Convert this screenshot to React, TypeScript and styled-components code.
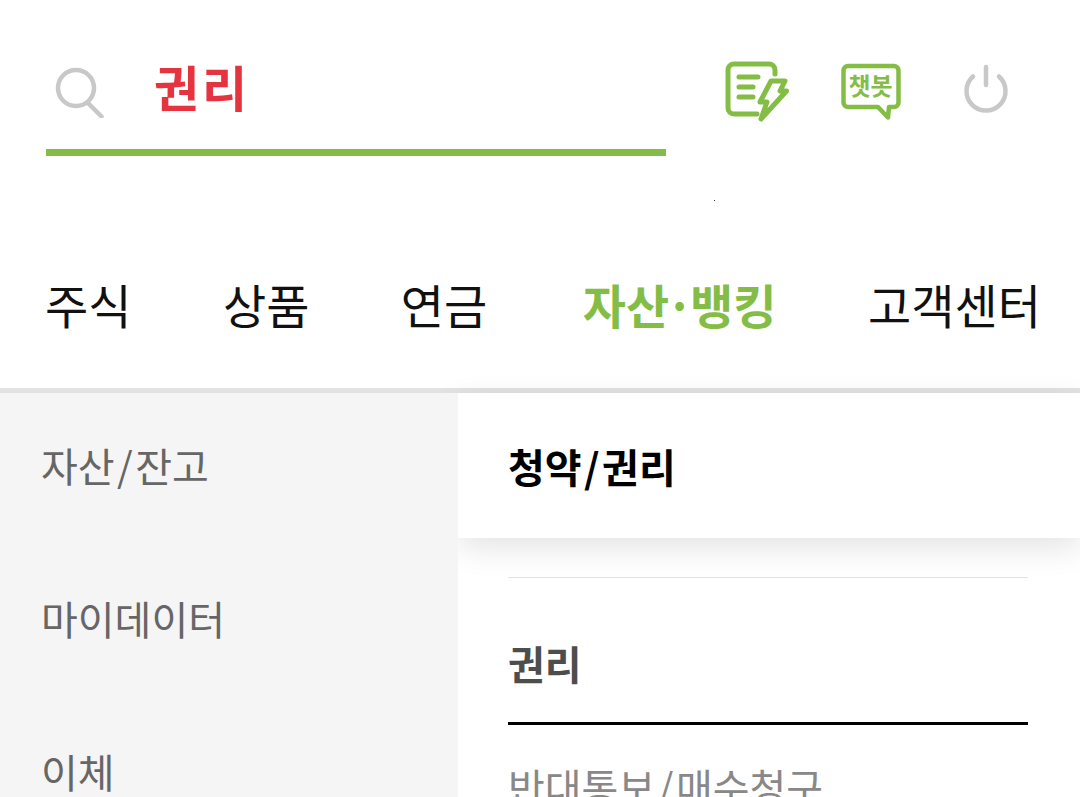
import React from "react";
import styled, { createGlobalStyle } from "styled-components";

const Global = createGlobalStyle`
  html, body { margin: 0; padding: 0; background: #fff; overflow: hidden; }
  body { font-family: "Noto Sans CJK KR", "Noto Sans", sans-serif; }
`;
const Page = styled.div`
  width: 1080px; height: 797px; overflow: hidden; display: flex; flex-direction: column; background: #fff;
`;
const Top = styled.header`
  height: 388px; flex: none; position: relative; display: flex; flex-direction: column;
`;
const SearchRow = styled.div`
  display: flex; height: 156px; flex: none; padding-left: 46px;
`;
const SearchBox = styled.div`
  width: 620px; height: 156px; box-sizing: border-box; border-bottom: 7px solid #84bd45;
  display: flex; align-items: flex-start; padding: 60px 0 0 8px; gap: 50px;
`;
const Query = styled.span`
  font-size: 49px; line-height: 52px; font-weight: 700; color: #e5343f; letter-spacing: 3px;
`;
const Tools = styled.div`
  display: flex; align-items: flex-start; padding: 61px 0 0 59px; gap: 48px;
`;
const Speck = styled.i`
  position: absolute; left: 714px; top: 200px; width: 1px; height: 1px; background: #333;
`;
const Nav = styled.nav`
  display: flex; align-items: center; justify-content: space-between; padding: 0 39px 0 45px; margin-top: 120px; height: 56px;
`;
const NavItem = styled.span<{ $active?: boolean }>`
  font-size: 47px; line-height: 56px;
  margin-left: ${p => (p.$active ? 4 : 0)}px;
  font-weight: ${p => (p.$active ? 700 : 400)};
  color: ${p => (p.$active ? "#84bd45" : "#111")};
`;
const NavDot = styled.span`
  margin: 0 -3.5px;
`;
const Divider = styled.div`
  height: 5px; flex: none; background: #e2e2e2;
`;
const Body = styled.div`
  flex: 1; display: flex; min-height: 0;
`;
const Side = styled.aside`
  width: 458px; flex: none; background: #f5f5f5; display: flex; flex-direction: column; padding: 41px 0 0 41px;
  box-sizing: border-box; gap: 91px; position: relative; z-index: 1;
`;
const SideItem = styled.div`
  font-size: 40px; line-height: 62px; color: #666;
`;
const Slash = styled.span<{ $gap: number }>`
  margin: 0 ${p => p.$gap}px;
`;
const Main = styled.main`
  flex: 1; min-width: 0; display: flex; flex-direction: column;
`;
const Section = styled.div`
  height: 145px; flex: none; display: flex; align-items: center; padding-left: 50px; background: #fff;
  font-size: 40px; font-weight: 700; color: #000; box-shadow: 0 10px 30px rgba(0,0,0,.11); position: relative;
`;
const Content = styled.div`
  padding: 39px 52px 0 50px;
`;
const ThinRule = styled.div`
  height: 1px; background: #e2e2e2;
`;
const Group = styled.div`
  height: 147px; box-sizing: border-box; border-bottom: 3px solid #000; padding-top: 56px;
  font-size: 40px; line-height: 58px; font-weight: 700; color: #4d4d4d;
`;
const Leaf = styled.div`
  font-size: 40px; line-height: 60px; color: #888; padding-top: 31px; white-space: nowrap;
`;

const SearchSvg = styled.svg`
  margin-top: 6px; flex: none;
`;
const ChatSvg = styled.svg`
  margin-top: 1px; flex: none;
`;
const PowerSvg = styled.svg`
  margin: 1px 0 0 14px; flex: none;
`;

const ReportIcon = () => (
  <svg width="66" height="62" viewBox="0 0 66 62" fill="none" stroke="#84bd45" strokeWidth="5" strokeLinecap="round" strokeLinejoin="round">
    <path d="M50 13V9a6 6 0 0 0-6-6H9a6 6 0 0 0-6 6v38a6 6 0 0 0 6 6h23" />
    <path d="M14 16h19M14 26h14M14 36h14" />
    <path d="M46 20h14l-5 10h6.500L36 58l6-17h-7z" strokeWidth="5" />
  </svg>
);
const ChatIcon = () => (
  <ChatSvg width="62" height="60" viewBox="0 0 62 60" fill="none">
    <path d="M9 4h46a4.500 4.500 0 0 1 4.500 4.500v32a4.500 4.500 0 0 1-4.500 4.500h-5l-1 10.500-10-10.500H9a4.500 4.500 0 0 1-4.500-4.500v-32A4.500 4.500 0 0 1 9 4z" stroke="#84bd45" strokeWidth="4.5" strokeLinejoin="round" />
    <text x="31.5" y="33" textAnchor="middle" fontSize="24" fontWeight="700" fill="#84bd45" fontFamily="'Noto Sans CJK KR', sans-serif">챗봇</text>
  </ChatSvg>
);
const PowerIcon = () => (
  <PowerSvg width="46" height="54" viewBox="0 0 46 54" fill="none" stroke="#c8c8c8" strokeWidth="4.5" strokeLinecap="round">
    <path d="M23 5v18" />
    <path d="M10 14.500A19.500 19.500 0 1 0 36 14.500" />
  </PowerSvg>
);
const SearchIcon = () => (
  <SearchSvg width="50" height="52" viewBox="0 0 50 52" fill="none" stroke="#c8c8c8" strokeWidth="4.5" strokeLinecap="round">
    <circle cx="22" cy="22" r="18" />
    <path d="M34 37l13.500 13.500" />
  </SearchSvg>
);

export default function App() {
  return (
    <Page>
      <Global />
      <Top>
        <SearchRow>
          <SearchBox>
            <SearchIcon />
            <Query>권리</Query>
          </SearchBox>
          <Tools>
            <ReportIcon />
            <ChatIcon />
            <PowerIcon />
          </Tools>
        </SearchRow>
        <Speck />
        <Nav>
          <NavItem>주식</NavItem>
          <NavItem>상품</NavItem>
          <NavItem>연금</NavItem>
          <NavItem $active>자산<NavDot>·</NavDot>뱅킹</NavItem>
          <NavItem>고객센터</NavItem>
        </Nav>
      </Top>
      <Divider />
      <Body>
        <Side>
          <SideItem>자산<Slash $gap={2.5}>/</Slash>잔고</SideItem>
          <SideItem>마이데이터</SideItem>
          <SideItem>이체</SideItem>
        </Side>
        <Main>
          <Section><span>청약<Slash $gap={2.5}>/</Slash>권리</span></Section>
          <Content>
            <ThinRule />
            <Group>권리</Group>
            <Leaf>반대통보<Slash $gap={2.5}>/</Slash>매수청구</Leaf>
          </Content>
        </Main>
      </Body>
    </Page>
  );
}
